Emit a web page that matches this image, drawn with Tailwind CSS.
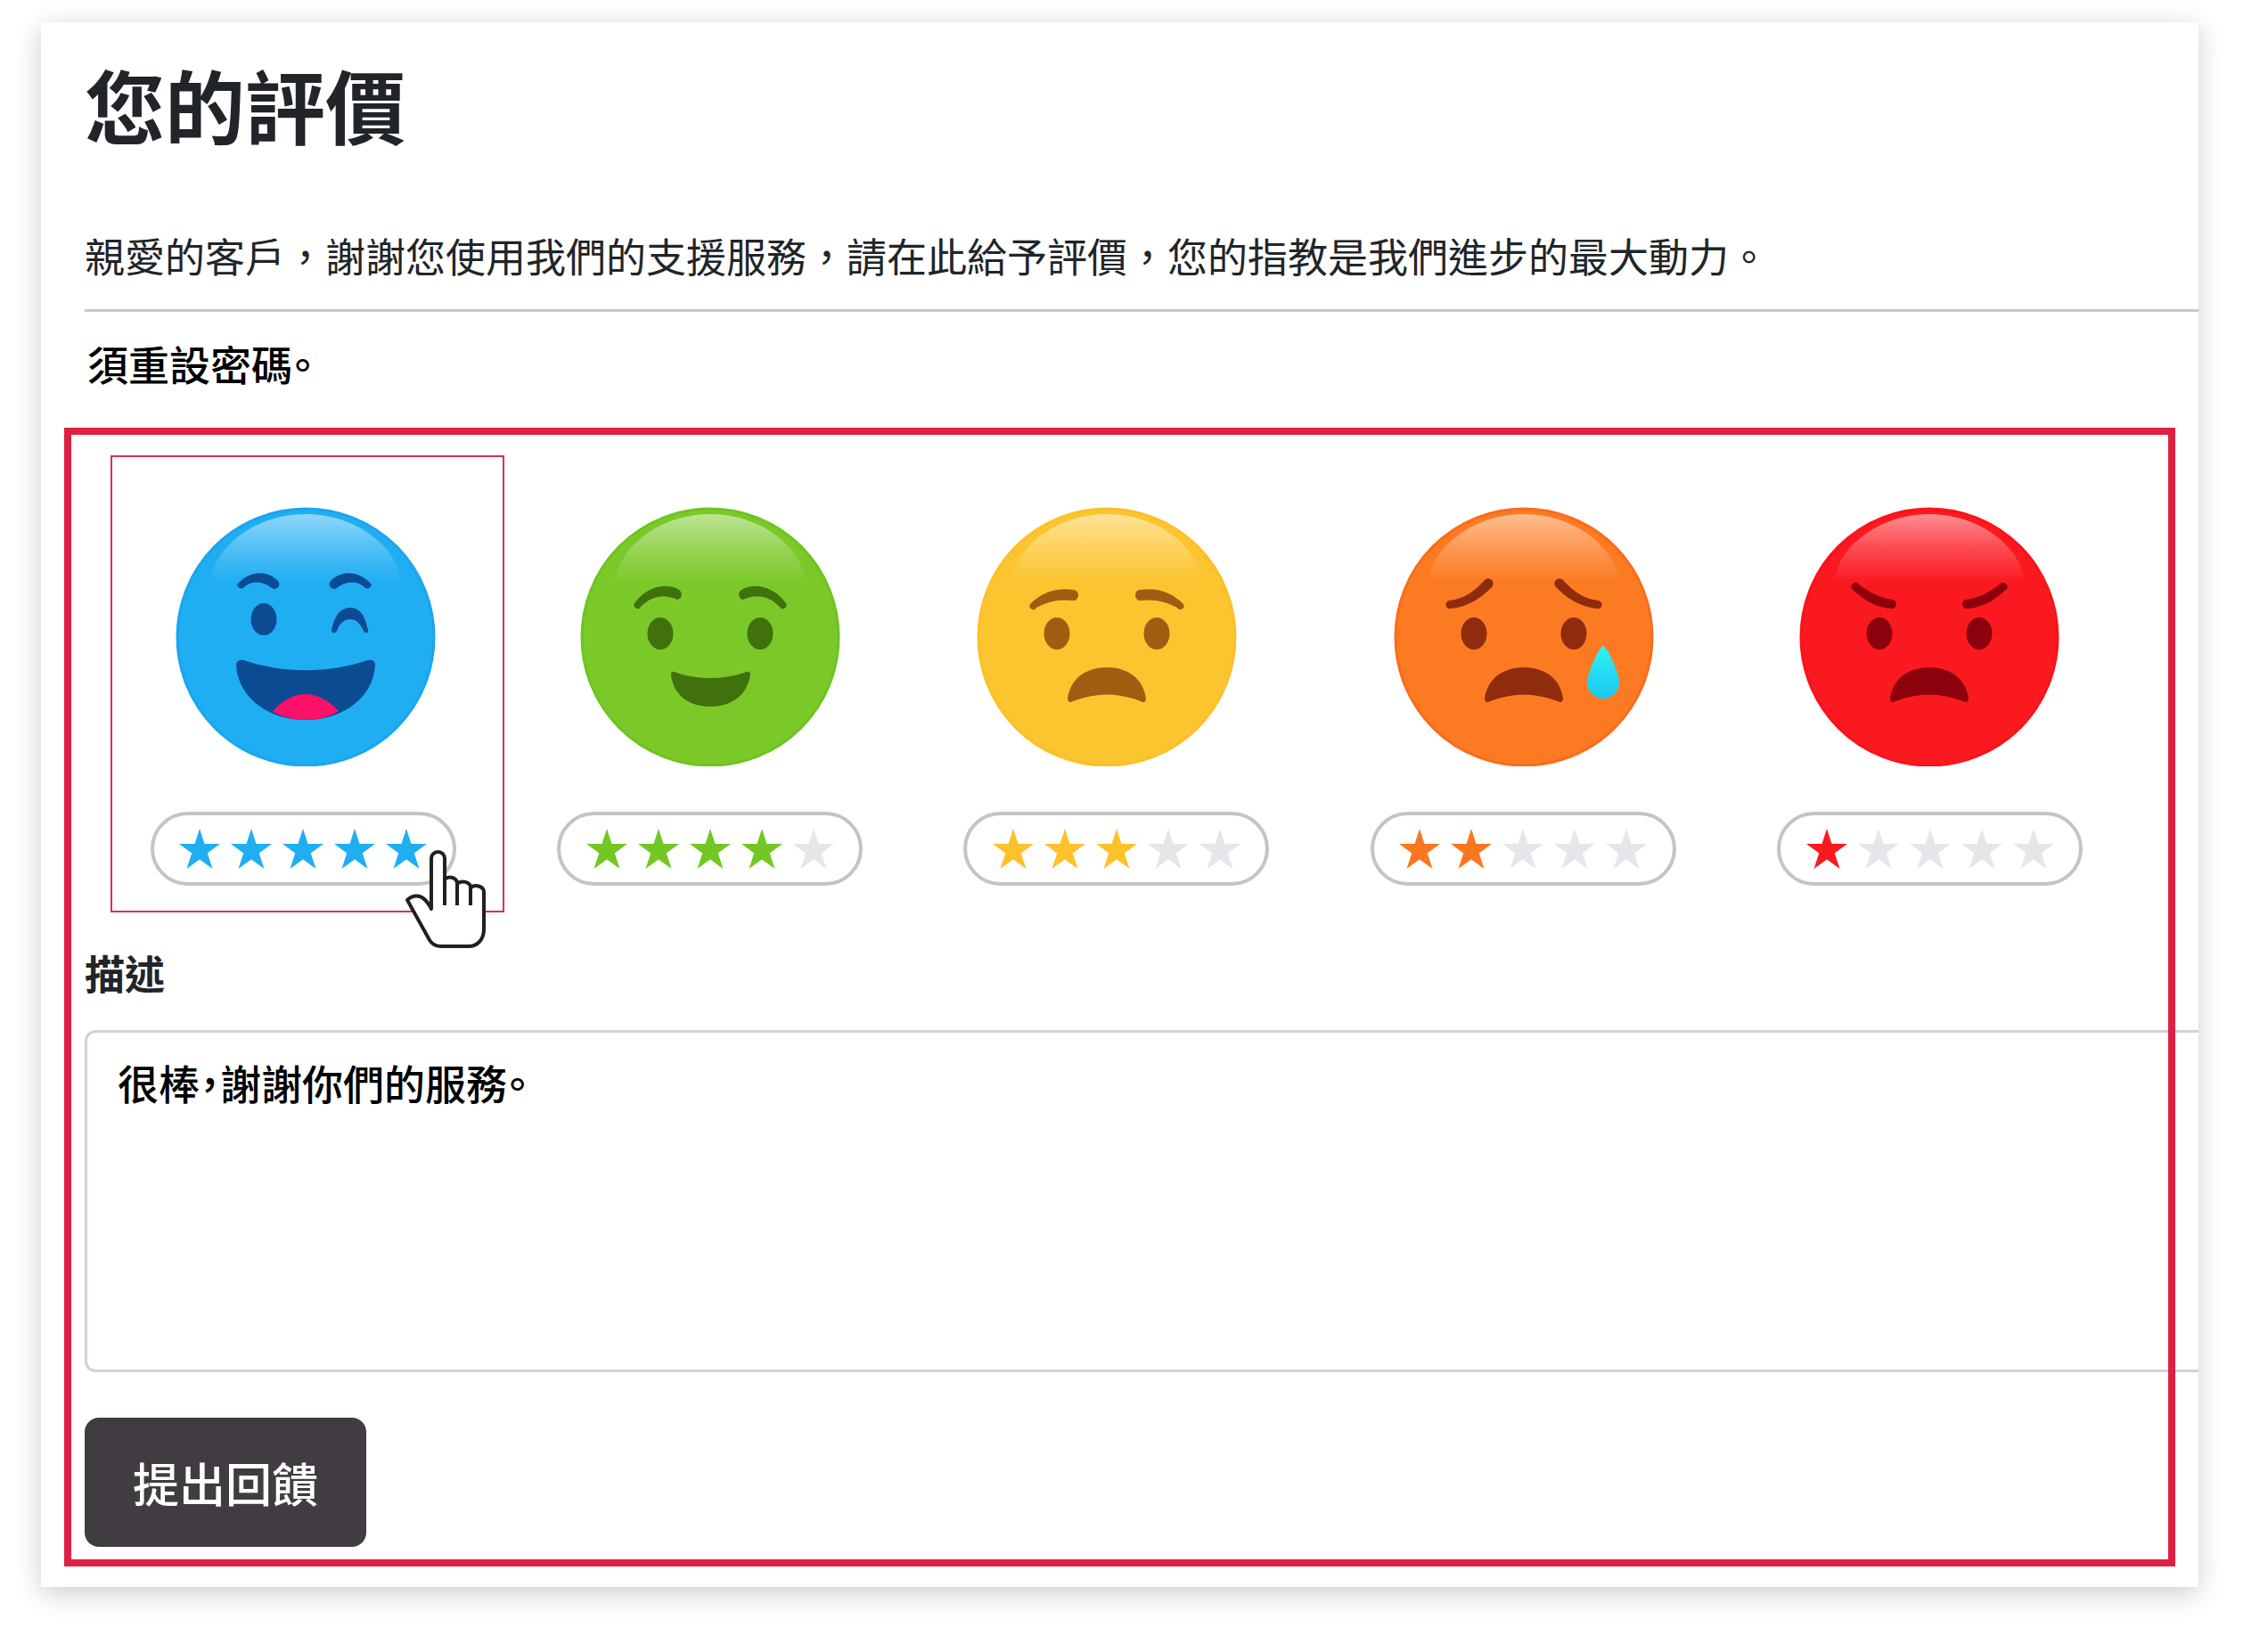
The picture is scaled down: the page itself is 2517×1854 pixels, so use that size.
<!DOCTYPE html>
<html lang="zh-Hant">
<head>
    <meta charset="UTF-8">
    <meta name="viewport" content="width=device-width, initial-scale=1.0">
    <title>您的評價</title>
    <script src="https://cdn.jsdelivr.net/npm/@tailwindcss/browser@4"></script>
</head>
<body class="bg-white pt-[25px] pl-[46px] pr-[50px] pb-[73px] font-['Noto_Sans_CJK_TC',sans-serif] text-[#212529]">
    <!-- Shared shapes -->
    <svg class="absolute w-0 h-0" aria-hidden="true">
        <defs>
            <linearGradient id="gloss_fill" x1="0" y1="0" x2="0" y2="1">
                <stop offset="0" stop-color="#fff" stop-opacity="0.5"/>
                <stop offset="0.5" stop-color="#fff" stop-opacity="0.22"/>
                <stop offset="1" stop-color="#fff" stop-opacity="0"/>
            </linearGradient>
            <linearGradient id="tear_fill" x1="0" y1="0" x2="0" y2="1">
                <stop offset="0" stop-color="#2ff3f3"/>
                <stop offset="1" stop-color="#1cc6f1"/>
            </linearGradient>
            <path id="gloss" d="M-107-62C-103-100-58-138 0-138S103-100 107-62Z" fill="url(#gloss_fill)"/>
            <g id="eyes">
                <ellipse cx="-56" cy="-4" rx="14.500" ry="18"/>
                <ellipse cx="56" cy="-4" rx="14.500" ry="18"/>
            </g>
            <path id="frown" d="M-44 69C-41 47-24 34 0 34S41 47 44 69C44 73 41 74 38 72C12 62-12 62-38 72C-41 74-44 73-44 69Z"/>
            <symbol id="star" viewBox="0 0 46 45">
                <path d="M23 0L28.500 17H46L31.800 27.500L37.500 45L23 34.500L8.500 45L14.200 27.500L0 17H17.500Z" fill="currentColor"/>
            </symbol>
        </defs>
    </svg>

    <main class="bg-white pt-[37px] pl-[49px] pb-[23px] shadow-[0_7px_28px_rgba(0,0,0,0.2)]">
        <h1 class="text-[90px] leading-[108px] font-bold">您的評價</h1>
        <p class="mt-[82px] text-[45px] leading-[70px]">親愛的客戶，謝謝您使用我們的支援服務，請在此給予評價，您的指教是我們進步的最大動力。</p>
        <hr class="mt-[25px] border-0 h-[3px] bg-[#c8c8c8]">
        <p class="mt-[22px] pl-[3px] text-[46px] leading-[70px] font-medium text-black [font-feature-settings:'halt']">須重設密碼。</p>

        <!-- Feedback Form -->
        <form class="relative mt-[38px] pt-[31px] pb-[22px]">
            <div role="radiogroup" aria-label="評價" class="grid grid-cols-5 gap-[14px] pl-[29px] pr-[75px]">
                <label class="relative flex flex-col items-center pt-[56px] pr-[10px] pb-[28px] border-2 border-transparent has-checked:border-[#d83350]">
                    <input type="radio" name="rating" value="5" class="sr-only" aria-label="5" checked>
                    <svg class="w-[343px] h-[291px]" viewBox="-174 -146 343 291">
                        <circle r="144" fill="#20aef3" stroke="#1ba5ef" stroke-width="3"/>
                        <use href="#gloss"/>
                        <g fill="#0b4b92">
                            <path d="M-77-59C-64-74-45-76-32-64a5 5 0 0 1-6 9C-47-63-61-64-70-55a5 5 0 0 1-7-4Z"/>
                            <path transform="translate(-3) scale(-1 1)" d="M-77-59C-64-74-45-76-32-64a5 5 0 0 1-6 9C-47-63-61-64-70-55a5 5 0 0 1-7-4Z"/>
                            <ellipse cx="-47" cy="-20" rx="14.500" ry="18"/>
                            <path d="M29-8C33-26 40-33 50-33S66-26 70-8C71-4 67-4 65-7C60-17 56-20 50-20S39-17 35-7C33-4 29-4 29-8Z"/>
                            <path d="M-78 31C-78 26-73 25-69 26C-25 41 25 41 69 26C74 25 78 26 78 31C76 68 42 93 0 93S-76 68-78 31Z"/>
                        </g>
                        <path d="M-37 83C-25 70-12 64 0 64S25 70 37 83C26 90 13 93 0 93S-26 90-37 83Z" fill="#ff1069"/>
                    </svg>
                    <span class="mt-[51px] w-[343px] h-[83px] flex items-center justify-center gap-3 rounded-full border-4 border-[#c4c4c4] text-[#20aef3]">
                        <svg class="w-[46px] h-[45px]"><use href="#star"/></svg>
                        <svg class="w-[46px] h-[45px]"><use href="#star"/></svg>
                        <svg class="w-[46px] h-[45px]"><use href="#star"/></svg>
                        <svg class="w-[46px] h-[45px]"><use href="#star"/></svg>
                        <svg class="w-[46px] h-[45px]"><use href="#star"/></svg>
                    </span>
                    <!-- Hand pointer -->
                    <svg class="absolute -bottom-[44px] right-[17px] w-[92px] h-[112px]" viewBox="0 0 92 112" fill="#fff" stroke="#221f1f" stroke-width="4" stroke-linejoin="round">
                        <path d="M29 66V9.500a7.500 7.500 0 0 1 15 0V33c5-5 14-2 14 5c5-5 15-2 15 4c6-4 15-1 15 5V89c0 11-7 19-17 19H40c-6 0-10-2-13-7L2 56c9-8 19-6 27 10Z"/>
                        <path d="M44 31V62M58 36V62M73 40V62" fill="none"/>
                    </svg>
                </label>

                <label class="relative flex flex-col items-center pt-[56px] pr-[10px] pb-[28px] border-2 border-transparent has-checked:border-[#d83350]">
                    <input type="radio" name="rating" value="4" class="sr-only" aria-label="4">
                    <svg class="w-[343px] h-[291px]" viewBox="-172 -146 343 291">
                        <circle r="144" fill="#7bc929" stroke="#6dc41f" stroke-width="3"/>
                        <use href="#gloss"/>
                        <g fill="#40710d">
                            <path d="M-85-38C-72-56-50-62-35-53a6 6 0 0 1-2 11C-52-49-66-46-78-34a4 4 0 0 1-7-4Z"/>
                            <path transform="scale(-1 1)" d="M-85-38C-72-56-50-62-35-53a6 6 0 0 1-2 11C-52-49-66-46-78-34a4 4 0 0 1-7-4Z"/>
                            <use href="#eyes"/>
                            <path d="M-44 42C-44 38-41 38-38 40C-13 48 13 48 38 40C41 38 45 38 45 42C42 64 25 78 0 78S-42 64-44 42Z"/>
                        </g>
                    </svg>
                    <span class="mt-[51px] w-[343px] h-[83px] flex items-center justify-center gap-3 rounded-full border-4 border-[#c4c4c4] text-[#72c723]">
                        <svg class="w-[46px] h-[45px]"><use href="#star"/></svg>
                        <svg class="w-[46px] h-[45px]"><use href="#star"/></svg>
                        <svg class="w-[46px] h-[45px]"><use href="#star"/></svg>
                        <svg class="w-[46px] h-[45px]"><use href="#star"/></svg>
                        <svg class="w-[46px] h-[45px] text-[#e5e6e9]"><use href="#star"/></svg>
                    </span>
                </label>

                <label class="relative flex flex-col items-center pt-[56px] pr-[10px] pb-[28px] border-2 border-transparent has-checked:border-[#d83350]">
                    <input type="radio" name="rating" value="3" class="sr-only" aria-label="3">
                    <svg class="w-[343px] h-[291px]" viewBox="-161 -146 343 291">
                        <circle r="144" fill="#fcc530" stroke="#fdbf28" stroke-width="3"/>
                        <use href="#gloss"/>
                        <g fill="#a25c12">
                            <path d="M-86-37C-73-51-55-56-37-53a5 6 0 0 1 0 12C-53-43-67-40-79-33a4 4 0 0 1-7-4Z"/>
                            <path transform="scale(-1 1)" d="M-86-37C-73-51-55-56-37-53a5 6 0 0 1 0 12C-53-43-67-40-79-33a4 4 0 0 1-7-4Z"/>
                            <use href="#eyes"/>
                            <use href="#frown"/>
                        </g>
                    </svg>
                    <span class="mt-[51px] w-[343px] h-[83px] flex items-center justify-center gap-3 rounded-full border-4 border-[#c4c4c4] text-[#fdc12b]">
                        <svg class="w-[46px] h-[45px]"><use href="#star"/></svg>
                        <svg class="w-[46px] h-[45px]"><use href="#star"/></svg>
                        <svg class="w-[46px] h-[45px]"><use href="#star"/></svg>
                        <svg class="w-[46px] h-[45px] text-[#e5e6e9]"><use href="#star"/></svg>
                        <svg class="w-[46px] h-[45px] text-[#e5e6e9]"><use href="#star"/></svg>
                    </span>
                </label>

                <label class="relative flex flex-col items-center pt-[56px] pr-[10px] pb-[28px] border-2 border-transparent has-checked:border-[#d83350]">
                    <input type="radio" name="rating" value="2" class="sr-only" aria-label="2">
                    <svg class="w-[343px] h-[291px]" viewBox="-172 -146 343 291">
                        <circle r="144" fill="#fc7b22" stroke="#fb6b1c" stroke-width="3"/>
                        <use href="#gloss"/>
                        <g fill="#8f2c0d">
                            <path d="M-84-41C-66-43-55-52-44-64a5 5 0 0 1 8 8C-50-42-64-34-82-32a4 4 0 0 1-2-9Z"/>
                            <path transform="scale(-1 1)" d="M-84-41C-66-43-55-52-44-64a5 5 0 0 1 8 8C-50-42-64-34-82-32a4 4 0 0 1-2-9Z"/>
                            <use href="#eyes"/>
                            <use href="#frown"/>
                        </g>
                        <path d="M89 10C93 10 107 40 107 51A18 18 0 0 1 71 51C71 40 85 10 89 10Z" fill="url(#tear_fill)"/>
                    </svg>
                    <span class="mt-[51px] w-[343px] h-[83px] flex items-center justify-center gap-3 rounded-full border-4 border-[#c4c4c4] text-[#fc7620]">
                        <svg class="w-[46px] h-[45px]"><use href="#star"/></svg>
                        <svg class="w-[46px] h-[45px]"><use href="#star"/></svg>
                        <svg class="w-[46px] h-[45px] text-[#e5e6e9]"><use href="#star"/></svg>
                        <svg class="w-[46px] h-[45px] text-[#e5e6e9]"><use href="#star"/></svg>
                        <svg class="w-[46px] h-[45px] text-[#e5e6e9]"><use href="#star"/></svg>
                    </span>
                </label>

                <label class="relative flex flex-col items-center pt-[56px] pr-[10px] pb-[28px] border-2 border-transparent has-checked:border-[#d83350]">
                    <input type="radio" name="rating" value="1" class="sr-only" aria-label="1">
                    <svg class="w-[343px] h-[291px]" viewBox="-171 -146 343 291">
                        <circle r="144" fill="#fb1920" stroke="#fc121a" stroke-width="3"/>
                        <use href="#gloss"/>
                        <g fill="#8c020c">
                            <path d="M-81-61C-68-50-55-44-41-42a5 5 0 0 1-2 10C-60-33-74-42-87-54a5 5 0 0 1 6-7Z"/>
                            <path transform="scale(-1 1)" d="M-81-61C-68-50-55-44-41-42a5 5 0 0 1-2 10C-60-33-74-42-87-54a5 5 0 0 1 6-7Z"/>
                            <use href="#eyes"/>
                            <use href="#frown"/>
                        </g>
                    </svg>
                    <span class="mt-[51px] w-[343px] h-[83px] flex items-center justify-center gap-3 rounded-full border-4 border-[#c4c4c4] text-[#fb1920]">
                        <svg class="w-[46px] h-[45px]"><use href="#star"/></svg>
                        <svg class="w-[46px] h-[45px] text-[#e5e6e9]"><use href="#star"/></svg>
                        <svg class="w-[46px] h-[45px] text-[#e5e6e9]"><use href="#star"/></svg>
                        <svg class="w-[46px] h-[45px] text-[#e5e6e9]"><use href="#star"/></svg>
                        <svg class="w-[46px] h-[45px] text-[#e5e6e9]"><use href="#star"/></svg>
                    </span>
                </label>
            </div>

            <label for="description" class="block mt-[33px] text-[45px] leading-[70px] font-bold">描述</label>
            <textarea id="description" name="description"
                      class="block mt-[29px] w-full h-[384px] px-[34px] py-5 border-[3px] border-r-0 border-[#ced4da] rounded-l-xl resize-none text-[46px] leading-[70px] font-medium text-black [font-feature-settings:'halt']">很棒，謝謝你們的服務。</textarea>
            <button type="button" class="block mt-[51px] px-[54px] h-[145px] rounded-2xl bg-[#403c41] text-white text-[52px] leading-[78px] font-medium">提出回饋</button>

            <!-- Highlight frame -->
            <div class="absolute inset-y-0 -left-[23px] right-[26px] border-8 border-[#e02042] pointer-events-none"></div>
        </form>
    </main>
</body>
</html>
